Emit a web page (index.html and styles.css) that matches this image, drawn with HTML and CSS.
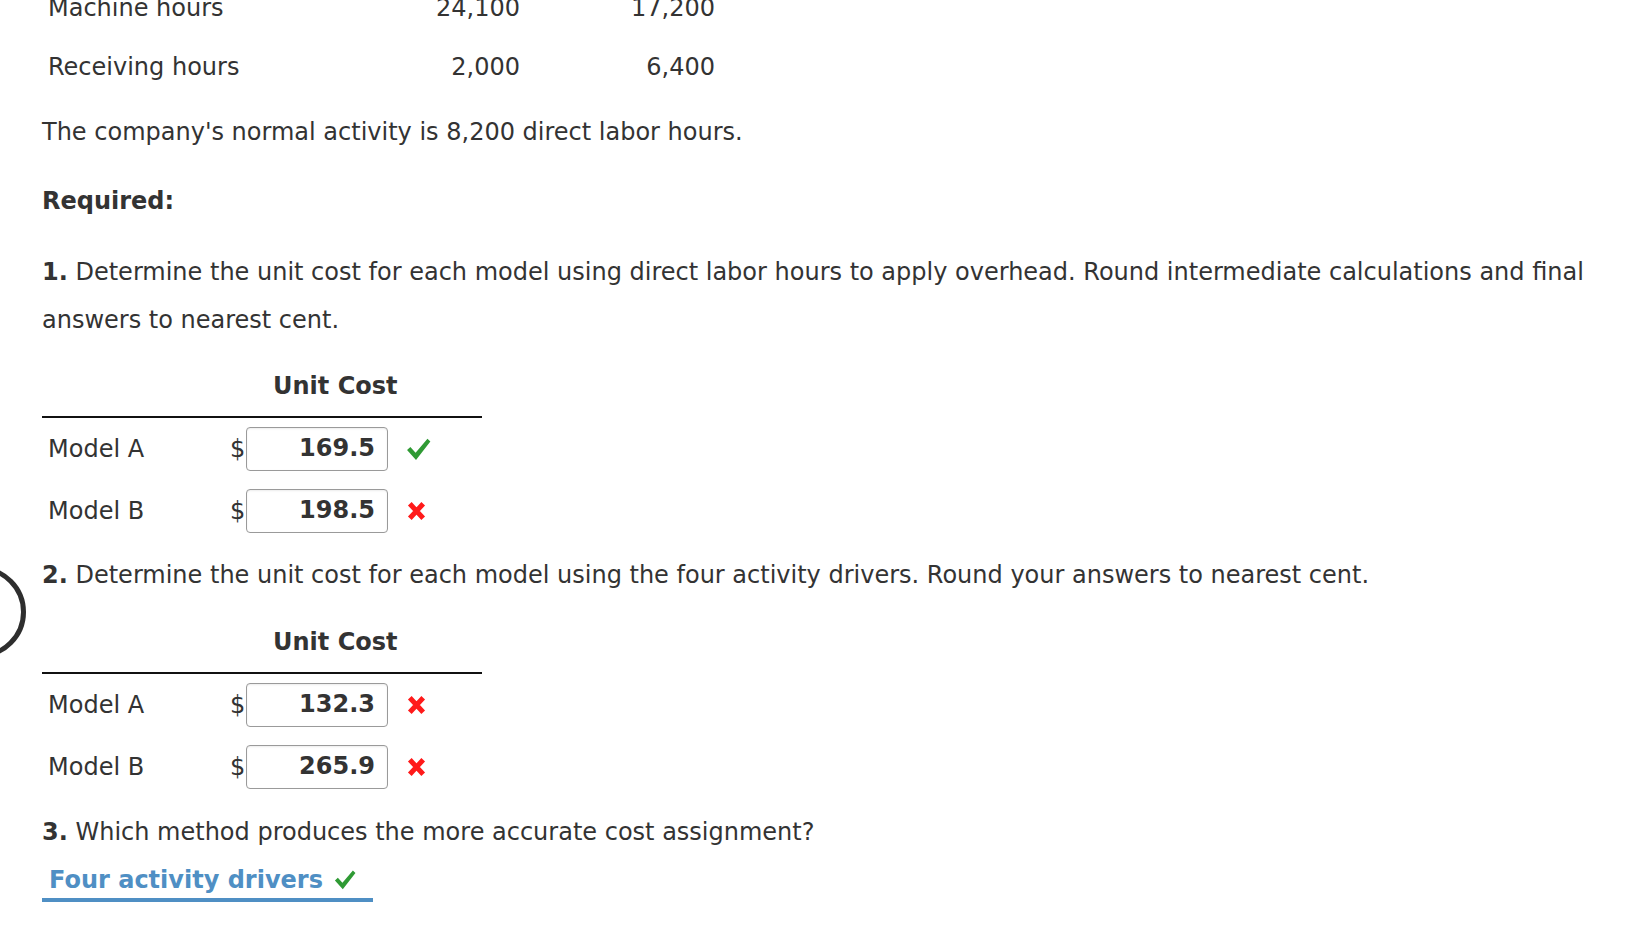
FILE: index.html
```html
<!DOCTYPE html>
<html lang="en">
<head>
<meta charset="utf-8">
<title>Unit Cost</title>
<link rel="stylesheet" href="styles.css">
</head>
<body>
<div class="page">
  <div class="arc"></div>

  <div class="data">
    <div class="drow"><span class="dl">Machine hours</span><span class="dv">24,100</span><span class="dv">17,200</span></div>
    <div class="drow"><span class="dl">Receiving hours</span><span class="dv">2,000</span><span class="dv">6,400</span></div>
  </div>

  <p class="txt note">The company's normal activity is 8,200 direct labor hours.</p>
  <p class="txt req">Required:</p>
  <p class="txt q q1"><b>1.</b> Determine the unit cost for each model using direct labor hours to apply overhead. Round intermediate calculations and final answers to nearest cent.</p>

  <div class="cost">
    <div class="cost-head"><span>Unit Cost</span></div>
    <div class="cost-row">
      <span class="lbl">Model A</span><span class="dollar">$</span><span class="box">169.5</span>
      <svg class="ok" viewBox="0 0 24 24"><polygon points="1,12.5 4.2,9.6 9.2,15 20.6,1.6 23.4,4.4 9.6,22"/></svg>
    </div>
    <div class="cost-row">
      <span class="lbl">Model B</span><span class="dollar">$</span><span class="box">198.5</span>
      <svg class="bad" viewBox="0 0 19 20"><path d="M2.8 2.8 L16.2 17.2 M16.2 2.8 L2.8 17.2"/></svg>
    </div>
  </div>

  <p class="txt q q2"><b>2.</b> Determine the unit cost for each model using the four activity drivers. Round your answers to nearest cent.</p>

  <div class="cost">
    <div class="cost-head"><span>Unit Cost</span></div>
    <div class="cost-row">
      <span class="lbl">Model A</span><span class="dollar">$</span><span class="box">132.3</span>
      <svg class="bad" viewBox="0 0 19 20"><path d="M2.8 2.8 L16.2 17.2 M16.2 2.8 L2.8 17.2"/></svg>
    </div>
    <div class="cost-row">
      <span class="lbl">Model B</span><span class="dollar">$</span><span class="box">265.9</span>
      <svg class="bad" viewBox="0 0 19 20"><path d="M2.8 2.8 L16.2 17.2 M16.2 2.8 L2.8 17.2"/></svg>
    </div>
  </div>

  <p class="txt q q3"><b>3.</b> Which method produces the more accurate cost assignment?</p>

  <div class="answer">
    <span class="answer-box">Four activity drivers
      <svg class="ok small" viewBox="0 0 24 24"><polygon points="1,12.5 4.2,9.6 9.2,15 20.6,1.6 23.4,4.4 9.6,22"/></svg>
    </span>
  </div>
</div>
</body>
</html>
```

FILE: styles.css
```css
html, body {
  margin: 0;
  padding: 0;
  background: #fff;
}

body {
  font-family: "DejaVu Sans", Verdana, sans-serif;
  font-size: 24px;
  color: #333;
  overflow: hidden;
}

.page {
  position: relative;
  padding-left: 42px;
  padding-right: 40px;
}

.arc {
  position: absolute;
  left: -66px;
  top: 588px;
  width: 82px;
  height: 82px;
  border: 5px solid #2e2e2e;
  border-radius: 50%;
}

.data {
  margin-top: -22px;
}

.drow {
  display: grid;
  grid-template-columns: 320px 152px 195px;
  height: 59px;
  align-items: center;
  padding-left: 6px;
}

.dv {
  text-align: right;
}

.txt {
  margin: 0;
  line-height: 48px;
}

.note { margin-top: 12px; }
.req { margin-top: 21px; font-weight: bold; }
.q1 { margin-top: 23px; }
.q2 { margin-top: 9px; }
.q3 { margin-top: 10px; }

.q b { font-weight: bold; }

.cost {
  width: 440px;
}

.cost-head {
  margin-top: 18px;
  height: 54px;
  line-height: 48px;
  border-bottom: 2px solid #111;
  padding-left: 231px;
  font-weight: bold;
}

.q2 + .cost .cost-head { margin-top: 19px; }

.cost-row {
  display: flex;
  align-items: center;
  height: 62px;
}

.lbl {
  width: 182px;
  padding-left: 6px;
}

.dollar {
  width: 16px;
}

.box {
  box-sizing: border-box;
  width: 142px;
  height: 44px;
  border: 1.5px solid #9a9a9a;
  border-radius: 4px;
  box-shadow: inset 0 1px 2px rgba(0,0,0,0.08);
  text-align: right;
  padding-right: 12px;
  line-height: 41px;
  font-weight: bold;
}

.ok {
  width: 25px;
  height: 25px;
  margin-left: 18px;
  fill: #2f9a34;
}

.bad {
  width: 19px;
  height: 20px;
  margin-left: 19px;
  fill: none;
  stroke: #ff1a1a;
  stroke-width: 5;
}

.answer {
  margin-top: 6px;
}

.answer-box {
  display: inline-flex;
  align-items: center;
  box-sizing: border-box;
  width: 331px;
  height: 40px;
  padding-left: 7px;
  border-bottom: 4px solid #4f8fc4;
  color: #4f8fc4;
  font-weight: bold;
}

.ok.small {
  width: 22px;
  height: 22px;
  margin-left: 11px;
}
```
